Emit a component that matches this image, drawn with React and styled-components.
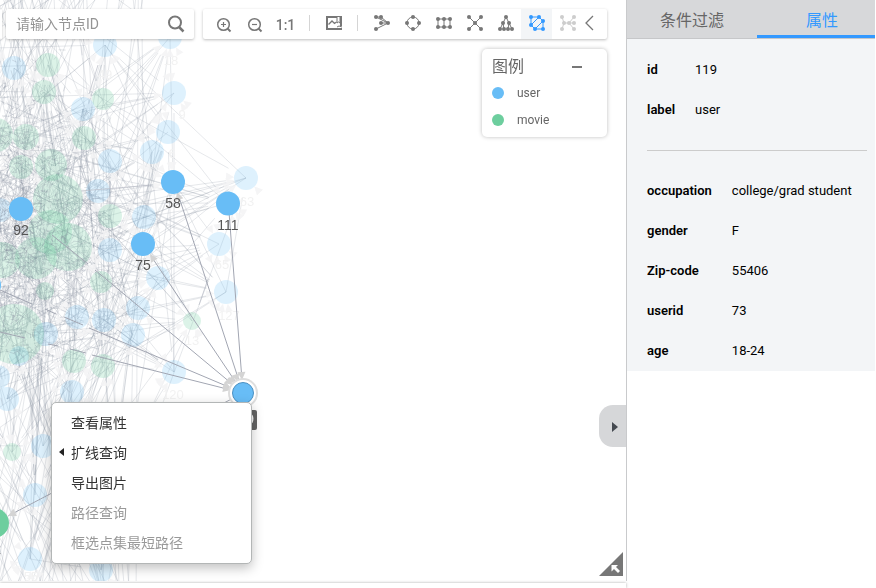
import React from 'react';
import styled, { createGlobalStyle } from 'styled-components';

const BLUE = '#68bdf6';
const GREEN = '#6dce9e';

const GlobalStyle = createGlobalStyle`
  * { box-sizing: border-box; }
  body {
    margin: 0;
    background: #fff;
    color: #000;
    font-family: Roboto, "Noto Sans CJK SC", sans-serif;
    font-size: 13px;
  }
  button, input { font: inherit; color: inherit; }
`;

const Page = styled.div`
  display: grid;
  grid-template-columns: minmax(0, 1fr) 249px;
  height: 100vh;
  padding-right: 1px;
  overflow: hidden;
`;

const Workspace = styled.main`
  display: flex;
  flex-direction: column;
  min-width: 0;
  min-height: 0;
`;

const Stage = styled.section`
  position: relative;
  flex: 1;
  min-height: 0;
  overflow: hidden;
`;

const BottomPanel = styled.div`
  height: 5px;
  margin-top: 2px;
  background: #fff;
  box-shadow: 0 0 3px rgba(0, 0, 0, 0.35);
`;

const GraphSvg = styled.svg`
  position: absolute;
  inset: 0;
  width: 100%;
  height: 100%;
  font-family: "Liberation Sans", sans-serif;
`;

const Overlay = styled.div`
  position: relative;
  display: flex;
  flex-direction: column;
  align-items: flex-end;
  gap: 10px;
  padding: 9px 19px 0 0;
`;

const Bars = styled.div`
  display: flex;
  align-self: stretch;
  gap: 9px;
`;

const Bar = styled.div`
  display: flex;
  align-items: center;
  height: 30px;
  background: #fff;
  border-radius: 2px;
  box-shadow: 0 1px 3px rgba(0, 0, 0, 0.26);
`;

const EdgeBar = styled(Bar)`
  width: 2px;
  margin-right: -5px;
`;

const SearchBar = styled(Bar)`
  flex: 1;
  min-width: 0;
  padding: 0 9px 0 10px;
`;

const SearchInput = styled.input`
  flex: 1;
  min-width: 0;
  padding: 0;
  border: 0;
  outline: 0;
  background: none;
  font-size: 14px;
  line-height: 20px;
  color: #555;
  &::placeholder { color: #949494; opacity: 1; }
`;

const PlainButton = styled.button`
  display: flex;
  align-items: center;
  justify-content: center;
  padding: 0;
  border: 0;
  background: none;
  cursor: pointer;
`;

const Tools = styled(Bar)`
  padding: 0 12px 0 5px;
`;

const ToolButton = styled(PlainButton)`
  width: ${(p) => (p.$narrow ? '12px' : '31px')};
  height: 30px;
  padding-top: ${(p) => (p.$low ? '2px' : '0')};
  padding-bottom: ${(p) => (p.$low ? '0' : '2px')};
  background: ${(p) => (p.$active ? '#f3f5f7' : 'none')};
  color: ${(p) => (p.$active ? '#3399ff' : p.disabled ? '#cdcdcd' : '#777')};
  font-size: 14px;
  font-weight: 500;
`;

const Separator = styled.span`
  width: 1px;
  height: 16px;
  margin: 0 8px 2px;
  background: #d5d5d5;
`;

const Legend = styled.section`
  width: 125px;
  padding: 6px 10px 4px;
  background: #fff;
  border-radius: 5px;
  box-shadow: 0 0 4px rgba(0, 0, 0, 0.26);
  color: #666;
`;

const LegendHead = styled.header`
  display: flex;
  align-items: center;
  justify-content: space-between;
  padding-right: 15px;
`;

const LegendTitle = styled.h2`
  margin: 0;
  font-size: 16px;
  font-weight: 400;
  line-height: 24px;
`;

const CollapseButton = styled(PlainButton)`
  width: 10px;
  height: 20px;
  &::before {
    content: "";
    width: 10px;
    height: 2px;
    background: #777;
  }
`;

const LegendList = styled.ul`
  margin: 0;
  padding: 0;
  list-style: none;
`;

const LegendItem = styled.li`
  display: flex;
  align-items: center;
  gap: 13px;
  height: 27px;
  font-size: 12px;
  &::before {
    content: "";
    width: 12px;
    height: 12px;
    border-radius: 50%;
    background: ${(p) => p.$color};
  }
`;

const ContextMenu = styled.menu`
  position: absolute;
  left: 51px;
  top: 402px;
  width: 201px;
  margin: 0;
  padding: 5px 0;
  list-style: none;
  background: #fff;
  border: 1px solid #b3b6b6;
  border-radius: 5px;
  box-shadow: 0 4px 12px rgba(0, 0, 0, 0.25);
`;

const MenuButton = styled(PlainButton)`
  justify-content: flex-start;
  width: 100%;
  height: 30px;
  padding: 0 0 2px 7px;
  font-size: 14px;
  color: #333;
  &:disabled { color: #999; }
`;

const MenuMark = styled.span`
  display: flex;
  width: 12px;
`;

const PanelHandle = styled(PlainButton)`
  position: absolute;
  right: 0;
  top: 405px;
  width: 27px;
  height: 42px;
  padding: 2px 0 0 5px;
  background: #d6d7d9;
  border-radius: 14px 0 0 14px;
`;

const ResizeCorner = styled(PlainButton)`
  position: absolute;
  right: 3px;
  bottom: 5px;
`;

const SidePanel = styled.aside`
  min-width: 0;
  height: calc(100% - 7px);
  border-left: 1px solid #c9cacc;
  overflow: hidden;
`;

const Tabs = styled.div`
  display: flex;
  height: 39px;
  overflow: hidden;
  background: #d7d8da;
  border-bottom: 1px solid #c6c7c9;
`;

const Tab = styled(PlainButton)`
  flex: 0 0 130px;
  padding-top: ${(p) => (p.$active ? '3px' : '0')};
  border-bottom: ${(p) => (p.$active ? '3px solid #3399ff' : '0')};
  color: ${(p) => (p.$active ? '#3399ff' : '#666')};
  font-size: 16px;
`;

const Properties = styled.div`
  padding: 11px 8px 0 20px;
  background: #f3f5f7;
`;

const PropertyList = styled.dl`
  display: grid;
  grid-template-columns: max-content 1fr;
  grid-auto-rows: 40px;
  column-gap: 20px;
  margin: 0;
  line-height: 40px;
`;

const PropertyName = styled.dt`
  font-weight: 600;
`;

const PropertyValue = styled.dd`
  margin: 0;
  white-space: nowrap;
`;

const Divider = styled.hr`
  height: 1px;
  margin: 20px 0;
  border: 0;
  background: #ccc;
`;

/* Toolbar icons share an 18px box centred on the origin. */
function Glyph({ dots = [], d, r = 2 }) {
  return (
    <svg width="18" height="18" viewBox="-9 -9 18 18" aria-hidden="true">
      <path d={d} fill="none" stroke="currentColor" strokeWidth="1" />
      {dots.map(([x, y]) => (
        <circle key={`${x},${y}`} cx={x} cy={y} r={r} fill="currentColor" />
      ))}
    </svg>
  );
}

const layouts = [
  {
    name: '力导向布局',
    dots: [[-6, -6], [-1, -6], [-1, 0], [-6, 6], [6, 0]],
    d: 'M-6-6L6 0L-6 6M-1-6L6 0H-1M-6-6H-1',
  },
  {
    name: '环形布局',
    dots: [[0, -6], [6, 0], [0, 6], [-6, 0]],
    d: 'M0-6A6 6 0 0 1 6 0A6 6 0 0 1 0 6A6 6 0 0 1-6 0A6 6 0 0 1 0-6',
  },
  {
    name: '网格布局',
    dots: [[-6, -4], [0, -4], [6, -4], [-6, 4], [0, 4], [6, 4]],
    d: 'M-6-4H6V4H-6ZM0-4V4',
  },
  {
    name: '辐射布局',
    dots: [[-6, -6], [6, -6], [0, 0], [-6, 6], [6, 6]],
    d: 'M-6-6L6 6M6-6L-6 6',
  },
  {
    name: '树形布局',
    dots: [[0, -6], [-3, 0], [3, 0], [-6, 6], [-2, 6], [2, 6], [6, 6]],
    d: 'M0-6L-6 6M0-6L6 6M-3 0L-2 6M3 0L2 6',
  },
  {
    name: '框选',
    active: true,
    dots: [[-6, -6], [2, -6], [6, -2], [-6, 2], [-2, 6], [6, 6]],
    d: 'M-6 2V-6H2L-6 2M-2 6H6V-2ZM2-6L6-2M-6 2L-2 6',
  },
  {
    name: '路径',
    disabled: true,
    dots: [[-6, -6], [6, -6], [-4, 0], [1, 0], [6, 0], [-6, 6], [6, 6]],
    d: 'M-6-6L-4 0L-6 6M-4 0H6M1 0L6-6M1 0L6 6',
  },
];

function ZoomGlyph({ plus }) {
  return (
    <svg width="16" height="16" viewBox="0 0 16 16" fill="none" stroke="currentColor" aria-hidden="true">
      <circle cx="7.500" cy="7.500" r="5.800" strokeWidth="1.500" />
      <path d="M11.500 11.500L14.500 14.500" strokeWidth="2" />
      <path d={plus ? 'M5 7.500H10M7.500 5V10' : 'M5 7.500H10'} strokeWidth="1.200" />
    </svg>
  );
}

/* [x, y, radius] of the dimmed nodes */
const dimBlue = [
  [14, 68], [105, 45], [170, 37], [174, 93], [168, 132], [152, 152], [83, 109],
  [110, 161], [98, 191], [246, 178], [144, 217], [0, 210], [110, 250], [158, 278],
  [219, 244], [226, 292], [138, 308], [77, 317], [104, 320], [133, 335], [46, 334],
  [174, 372], [72, 392], [-2, 377], [7, 399], [19, 356, 10], [43, 446], [35, 495],
  [30, 559], [101, 570],
];
const dimGreen = [
  [48, 65], [44, 92], [103, 99, 11], [84, 138], [26, 137, 13], [-4, 135, 17],
  [21, 167], [51, 165, 16], [58, 199, 25], [110, 216], [50, 232, 22], [36, 258, 21],
  [68, 247, 24], [2, 260, 18], [45, 291, 9], [101, 282, 11], [192, 321, 9],
  [14, 334, 30], [74, 361], [103, 366], [12, 452, 9],
];
const dimLabels = [
  ['18', 171, 65], ['9', 182, 119], ['6', 172, 158], ['63', 247, 206], ['65', 222, 269],
  ['127', 229, 320], ['13', 192, 345], ['120', 173, 399], ['55', 31, 581], ['49', 105, 79],
];
const activeNodes = [
  [173, 182, '58'], [228, 203.500, '111'], [143, 244, '75'], [21, 209, '92'], [-11, 285, ''],
];

function seeded(seed) {
  let s = seed;
  return () => {
    s = (s * 1664525 + 1013904223) % 4294967296;
    return s / 4294967296;
  };
}

function buildGraph() {
  const rnd = seeded(73);
  const nodes = [...dimBlue, ...dimGreen, [173, 182], [228, 203], [143, 244], [21, 209]];
  const hidden = () => {
    const side = rnd();
    if (side < 0.62) return [-20 - rnd() * 180, 40 + rnd() * 420];
    if (side < 0.84) return [-60 + rnd() * 220, -40 - rnd() * 60];
    return [-60 + rnd() * 200, 600 + rnd() * 60];
  };
  const link = (from, to, gap) => {
    const dx = to[0] - from[0];
    const dy = to[1] - from[1];
    const len = Math.hypot(dx, dy) || 1;
    const x = from[0] + (dx / len) * gap;
    const y = from[1] + (dy / len) * gap;
    return `M${x.toFixed(1)} ${y.toFixed(1)}L${to[0].toFixed(1)} ${to[1].toFixed(1)}`;
  };
  let links = '';
  nodes.forEach((node) => {
    const count = node[0] > 130 ? 9 : 8;
    for (let i = 0; i < count; i += 1) {
      const target = rnd() < 0.45 ? nodes[Math.floor(rnd() * nodes.length)] : hidden();
      if (node[0] > 200 && target[1] < 0) target[1] = 240;
      links += link(node, target, (node[2] || 12) + 8);
    }
  });
  for (let i = 0; i < 110; i += 1) links += link(hidden(), hidden(), 0);

  const normal = () => (rnd() + rnd() + rnd() - 1.5) / 1.5;
  let hatch = '';
  for (let i = 0; i < 1150; i += 1) {
    const x = Math.abs(normal()) * 125;
    const y = 225 + normal() * 195;
    const angle = rnd() * Math.PI;
    const len = 2 + rnd() * 8;
    hatch += `M${x.toFixed(1)} ${y.toFixed(1)}l${(Math.cos(angle) * len).toFixed(1)} ${(Math.sin(angle) * len).toFixed(1)}`;
  }
  const heads = [];
  nodes.forEach(([x, y, r = 12]) => {
    for (let i = 0; i < 6; i += 1) {
      const a = Math.PI * (0.15 + rnd() * 1.35);
      heads.push([x + Math.cos(a) * r, y + Math.sin(a) * r, (a * 180) / Math.PI]);
    }
  });
  return { links, hatch, heads };
}

const graph = buildGraph();

function Arrow({ x, y, angle, color = '#d4d4d4' }) {
  return (
    <path d="M0 0L8-4V4Z" fill={color} transform={`translate(${x} ${y}) rotate(${angle})`} />
  );
}

function NodeGraph() {
  return (
    <GraphSvg role="img" aria-label="关系图">
      <path d={graph.links} stroke="#8f94a6" strokeOpacity="0.22" fill="none" />
      <g opacity="0.85">
        {graph.heads.map(([x, y, a], i) => <Arrow key={i} x={x} y={y} angle={a} color="#f4f4f5" />)}
      </g>
      <g fill={BLUE} fillOpacity="0.22">
        {dimBlue.map(([x, y, r = 12]) => <circle key={`${x},${y}`} cx={x} cy={y} r={r} />)}
      </g>
      <g fill={GREEN} fillOpacity="0.24">
        {dimGreen.map(([x, y, r = 12]) => <circle key={`${x},${y}`} cx={x} cy={y} r={r} />)}
      </g>
      <path d={graph.hatch} stroke="#858c9b" strokeOpacity="0.25" fill="none" />
      <g fill="#f2f2f2" fontSize="13" textAnchor="middle">
        {dimLabels.map(([t, x, y]) => <text key={t} x={x} y={y}>{t}</text>)}
      </g>
      <path
        d="M98 65L89 94M81 191L152 185M208 279L199 305M74 275V302"
        stroke="#b9bcc6"
        strokeOpacity="0.7"
        fill="none"
      />

      <path
        d="M243 393L178 194M243 393L229 212M243 393L151 256M243 393L95 270M88 264L52 235M243 393L89 328M83 325L64 317M56 314L45 309M32 304L0 290M243 393L92 355M86 353L70 349M58 346L48 344M25 338L0 332M243 393L8 516"
        stroke="#a2a6b2"
        fill="none"
      />
      <Arrow x={242} y={380} angle={-94} />
      <Arrow x={238} y={382} angle={-109} />
      <Arrow x={235} y={384} angle={-124} />
      <Arrow x={233} y={385} angle={-141} />
      <Arrow x={231} y={388} angle={-157} />
      <Arrow x={231} y={390} angle={-167} />
      <Arrow x={177} y={192} angle={72} />
      <Arrow x={150} y={254} angle={56} />
      <Arrow x={8} y={516} angle={-27} />

      {activeNodes.map(([x, y, label]) => (
        <g key={`${x},${y}`}>
          <circle cx={x} cy={y} r="12" fill={BLUE} />
          {label && <text x={x} y={y + 26} fontSize="14" fill="#555" textAnchor="middle">{label}</text>}
        </g>
      ))}
      <circle cx="-6" cy="523" r="15" fill={GREEN} />
      <text x="1" y="554" fontSize="14" fill="#555" textAnchor="end">2</text>

      <rect x="229" y="410" width="28" height="20" rx="2" fill="#646464" />
      <text x="243" y="424" fontSize="14" fill="#fff" textAnchor="middle">119</text>
      <circle cx="243" cy="393" r="15" fill="#dedede" />
      <circle cx="243" cy="393" r="13" fill="#fff" />
      <circle cx="243" cy="393" r="10.500" fill={BLUE} stroke="#4a90c2" />
    </GraphSvg>
  );
}

const menuItems = [
  { text: '查看属性' },
  { text: '扩线查询', expand: true },
  { text: '导出图片' },
  { text: '路径查询', disabled: true },
  { text: '框选点集最短路径', disabled: true },
];

const summary = [['id', '119'], ['label', 'user']];
const details = [
  ['occupation', 'college/grad student'],
  ['gender', 'F'],
  ['Zip-code', '55406'],
  ['userid', '73'],
  ['age', '18-24'],
];

function PropertyTable({ rows }) {
  return (
    <PropertyList>
      {rows.map(([name, value]) => (
        <React.Fragment key={name}>
          <PropertyName>{name}</PropertyName>
          <PropertyValue>{value}</PropertyValue>
        </React.Fragment>
      ))}
    </PropertyList>
  );
}

export default function App() {
  return (
    <Page>
      <GlobalStyle />
      <Workspace>
        <Stage>
          <NodeGraph />
          <Overlay>
            <Bars>
              <EdgeBar />
              <SearchBar>
                <SearchInput type="text" aria-label="节点ID" placeholder="请输入节点ID" />
                <PlainButton type="button" aria-label="搜索">
                  <svg width="18" height="18" viewBox="0 0 18 18" fill="none" stroke="#777" aria-hidden="true">
                    <circle cx="8" cy="7.500" r="6" strokeWidth="2" />
                    <path d="M12 12L16.500 16.500" strokeWidth="2.500" />
                  </svg>
                </PlainButton>
              </SearchBar>
              <Tools role="toolbar">
                <ToolButton type="button" $low aria-label="放大"><ZoomGlyph plus /></ToolButton>
                <ToolButton type="button" $low aria-label="缩小"><ZoomGlyph /></ToolButton>
                <ToolButton type="button" $low>1:1</ToolButton>
                <Separator />
                <ToolButton type="button" aria-label="图片">
                  <svg width="16" height="16" viewBox="0 0 16 16" fill="none" stroke="currentColor" aria-hidden="true">
                    <path d="M15 11V2H1V14H15V13" strokeWidth="2" />
                    <path d="M2.500 9.500L6 6L8.500 8.500L10.500 7" strokeWidth="1.300" />
                    <path d="M11 2V8L12.500 7L14 8V2" fill="#fff" />
                    <path d="M11 12L13 11L16 12" />
                  </svg>
                </ToolButton>
                <Separator />
                {layouts.map(({ name, active, disabled, dots, d }) => (
                  <ToolButton key={name} type="button" $active={active} disabled={disabled} aria-label={name}>
                    <Glyph dots={dots} d={d} />
                  </ToolButton>
                ))}
                <ToolButton type="button" $narrow aria-label="收起">
                  <svg width="9" height="16" viewBox="0 0 9 16" fill="none" stroke="currentColor" strokeWidth="1.300" aria-hidden="true">
                    <path d="M8 1L1 8L8 15" />
                  </svg>
                </ToolButton>
              </Tools>
            </Bars>
            <Legend>
              <LegendHead>
                <LegendTitle>图例</LegendTitle>
                <CollapseButton type="button" aria-label="折叠图例" />
              </LegendHead>
              <LegendList>
                <LegendItem $color={BLUE}>user</LegendItem>
                <LegendItem $color={GREEN}>movie</LegendItem>
              </LegendList>
            </Legend>
          </Overlay>
          <ContextMenu>
            {menuItems.map(({ text, expand, disabled }) => (
              <li key={text}>
                <MenuButton type="button" disabled={disabled}>
                  <MenuMark>
                    {expand && (
                      <svg width="5" height="8" viewBox="0 0 5 8" aria-hidden="true">
                        <path d="M5 0V8L0 4Z" fill="#222" />
                      </svg>
                    )}
                  </MenuMark>
                  {text}
                </MenuButton>
              </li>
            ))}
          </ContextMenu>
          <PanelHandle type="button" aria-label="收起面板">
            <svg width="6" height="10" viewBox="0 0 6 10" aria-hidden="true">
              <path d="M0 0L6 5L0 10Z" fill="#444950" />
            </svg>
          </PanelHandle>
          <ResizeCorner type="button" aria-label="展开缩略图">
            <svg width="24" height="24" viewBox="0 0 24 24" aria-hidden="true">
              <path d="M24 0V24H0Z" fill="#777" />
              <path d="M12.500 13H19L17 15L21 19L19 21L15 17L12.500 19.500Z" fill="#fff" />
            </svg>
          </ResizeCorner>
        </Stage>
        <BottomPanel />
      </Workspace>
      <SidePanel>
        <Tabs role="tablist">
          <Tab type="button" role="tab" aria-selected="false">条件过滤</Tab>
          <Tab type="button" role="tab" aria-selected="true" $active>属性</Tab>
        </Tabs>
        <Properties>
          <PropertyTable rows={summary} />
          <Divider />
          <PropertyTable rows={details} />
        </Properties>
      </SidePanel>
    </Page>
  );
}
